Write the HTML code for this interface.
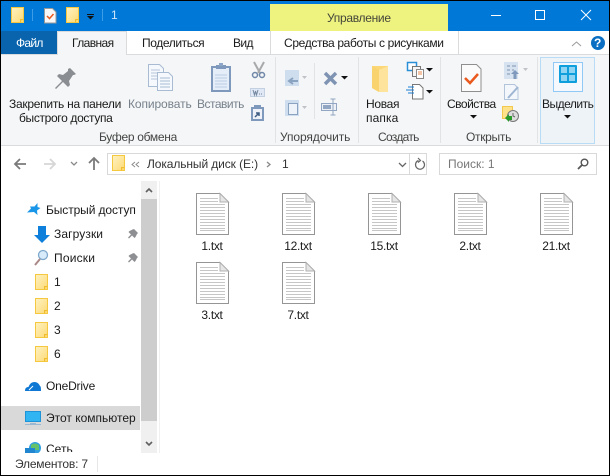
<!DOCTYPE html>
<html><head><meta charset="utf-8">
<style>
*{box-sizing:border-box}
html,body{margin:0;padding:0;width:610px;height:476px;overflow:hidden;background:#000}
#w{position:absolute;left:1px;top:1px;width:608px;height:474px;background:#fff;overflow:hidden}
#r{position:absolute;left:-1px;top:-1px;width:610px;height:476px;font:12px "Liberation Sans",sans-serif;color:#1a1a1a}
.t{position:absolute;white-space:nowrap;line-height:16px}
.g{color:#76818c}
.b{position:absolute}
svg{position:absolute;left:0;top:0}
</style></head><body>
<div id="w"><div id="r">
<div class="b" style="left:0;top:0;width:610px;height:31px;background:#0078d7"></div>
<div class="b" style="left:270px;top:4px;width:178px;height:27px;background:#eef27f"></div>
<div class="b" style="left:0;top:54px;width:610px;height:91px;background:#f5f6f7"></div>
<div class="b" style="left:0;top:145px;width:610px;height:1px;background:#dadbdc"></div>
<div class="b" style="left:0;top:54px;width:610px;height:1px;background:#dadbdc"></div>
<div class="b" style="left:1px;top:31px;width:56px;height:23px;background:#0a64ad"></div>
<div class="b" style="left:57px;top:31px;width:70px;height:24px;background:#f5f6f7;border:1px solid #dadbdc;border-bottom:0"></div>
<div class="b" style="left:270px;top:31px;width:1px;height:23px;background:#dadbdc"></div>
<div class="b" style="left:458px;top:31px;width:1px;height:23px;background:#dadbdc"></div>
<div class="b" style="left:275px;top:57px;width:1px;height:86px;background:#e2e3e4"></div>
<div class="b" style="left:314px;top:63px;width:1px;height:56px;background:#e2e3e4"></div>
<div class="b" style="left:358px;top:57px;width:1px;height:86px;background:#e2e3e4"></div>
<div class="b" style="left:440px;top:57px;width:1px;height:86px;background:#e2e3e4"></div>
<div class="b" style="left:537px;top:57px;width:1px;height:86px;background:#e2e3e4"></div>
<div class="b" style="left:540px;top:57px;width:55px;height:87px;background:#eef3f8;border:1px solid #b8dcf6"></div>
<div class="b" style="left:553px;top:62px;width:30px;height:30px;background:#f5f9fd;border:1px solid #90c8f6"></div>

<div class="b" style="left:107px;top:153px;width:320px;height:22px;border:1px solid #d9d9d9"></div>
<div class="b" style="left:409px;top:153px;width:1px;height:22px;background:#d9d9d9"></div>
<div class="b" style="left:439px;top:153px;width:158px;height:22px;border:1px solid #d9d9d9"></div>

<div class="b" style="left:1px;top:406px;width:139px;height:24px;background:#d9d9d9"></div>
<div class="b" style="left:141px;top:181px;width:16px;height:272px;background:#f0f0f0"></div>
<div class="b" style="left:141px;top:199px;width:16px;height:222px;background:#cdcdcd"></div>
<div class="b" style="left:159px;top:181px;width:1px;height:272px;background:#f0f0f0"></div>

<svg width="610" height="476" viewBox="0 0 610 476">
<defs>
<linearGradient id="fg" x1="0" y1="0" x2="1" y2="1"><stop offset="0" stop-color="#fff2c2"/><stop offset="1" stop-color="#fcd975"/></linearGradient>
<g id="fold"><rect x=".5" y=".5" width="12" height="15" fill="url(#fg)" stroke="#f6c83f"/><path d="M9.500 15.500v-3h3" fill="#f9d566" stroke="#f0bd32"/></g>
<g id="file"><path d="M.5.5H24L32.5 9V41.500H.5Z" fill="#fff" stroke="#959595"/><path d="M24 .5V9H32.500Z" fill="#e6e6e6" stroke="#b0b0b0"/>
<path d="M4 5.500H22M4 8.500H22M4 11.500H29M4 14.500H29M4 17.500H29M4 20.500H29M4 23.500H29M4 26.500H29M4 29.500H29M4 32.500H29M4 35.500H29M4 37.500H29" stroke="#c6c6c6" fill="none"/></g>
<g id="pin"><path d="M7 0l4 4-1 1-1.500 3-1 1-2.500-2.500-3 3-1-1 3-3-2.500-2.500 1-1 3-1.500z" fill="#8d8f92"/></g>
<path id="tri" d="M0 0h7L3.500 3.500z" fill="#111"/>
</defs>

<!-- QAT -->
<use href="#fold" x="11" y="7"/>
<rect x="32" y="9" width="1" height="12" fill="#3d9ce6"/>
<path d="M44.500 8.500h8l3.500 3.500v11h-11.500z" fill="#f8f8f8" stroke="#9a9a9a"/>
<path d="M47 16l2.500 2.500 4-4.500" stroke="#ea5a1e" stroke-width="1.500" fill="none"/>
<use href="#fold" x="66" y="7"/>
<rect x="87" y="14" width="7" height="1" fill="#111"/><use href="#tri" x="87" y="16"/>
<rect x="102" y="9" width="1" height="12" fill="#3d9ce6"/>
<!-- window controls -->
<rect x="491" y="15" width="10" height="1" fill="#fff"/>
<rect x="535.500" y="10.500" width="9" height="9" fill="none" stroke="#fff"/>
<path d="M581 10l10 10M591 10l-10 10" stroke="#fff" fill="none"/>
<path d="M572 46l4.500-4 4.500 4" stroke="#9a9a9a" fill="none"/>
<circle cx="598" cy="43" r="7" fill="#0a6fc2"/>

<!-- Pin big -->
<g transform="translate(55,68)"><path d="M15 0l6 6-2 1-1 0-4 6 1 4-2 2-5-5-7 7-1-1 7-7-5-5 2-2 4 1 5-4 0-2z" fill="#8a8d91"/></g>
<!-- Copy -->
<path d="M148.500 64.500h11l4 4v18h-15z" fill="#f5f8fc" stroke="#a9bbd3"/>
<path d="M151 70h9M151 73h9M151 76h9M151 79h9" stroke="#b6c5da"/>
<path d="M157.500 72.500h11l4 4v14h-15z" fill="#f5f8fc" stroke="#a9bbd3"/>
<path d="M160 78h10M160 81h10M160 84h10M160 87h10" stroke="#a9bbd3"/>
<!-- Paste -->
<rect x="212" y="67" width="18" height="24" fill="#e5edf8" stroke="#7f99bd" stroke-width="2"/>
<path d="M215 75h12M215 78h12M215 81h12M215 84h12M215 87h12" stroke="#bccde3"/>
<rect x="216" y="65" width="10" height="4" fill="#7f99bd"/><rect x="219" y="63" width="4" height="3" fill="#8ea6c6"/>
<!-- Cut -->
<path d="M254 62l6 11M264 62l-6 11" stroke="#a7a9ab" stroke-width="2" fill="none"/>
<circle cx="255" cy="75" r="2.500" fill="none" stroke="#6f87a8" stroke-width="1.500"/>
<circle cx="262" cy="75" r="2.500" fill="none" stroke="#6f87a8" stroke-width="1.500"/>
<rect x="250.500" y="88.500" width="14" height="8" fill="#dfe8f4" stroke="#c2d0e2"/>
<path d="M253 90l1.500 5 1-4 1 4 1.500-5M259 94h1M261 94h1" stroke="#7588a0" fill="none"/>
<rect x="252" y="108" width="11" height="12" fill="#eef2f8" stroke="#7f99bd" stroke-width="2"/>
<rect x="254" y="105" width="7" height="3" fill="#7f99bd"/>
<path d="M255 117l4-4M256 113h3v3" stroke="#3f5c82" fill="none" stroke-width="1.500"/>
<!-- Organize -->
<rect x="285" y="70" width="14" height="16" fill="#cfdeee"/><path d="M289 81h9M293 78l-4 3 4 3" stroke="#8aa3c0" stroke-width="2" fill="none"/>
<path d="M302 76h5l-2.500 3z" fill="#bfc3c8"/>
<rect x="285" y="100" width="14" height="16" fill="#cfdeee"/><rect x="288.500" y="103.500" width="9" height="11" fill="#eef3f9" stroke="#8aa3c0"/>
<path d="M302 106h5l-2.500 3z" fill="#bfc3c8"/>
<path d="M325 73l11 11M336 73l-11 11" stroke="#7f94b3" stroke-width="3.500" fill="none"/>
<use href="#tri" x="341" y="76"/>
<rect x="321.500" y="103.500" width="15" height="7" fill="#eef2f7" stroke="#90a6c2"/><rect x="323" y="105" width="8" height="4" fill="#90a6c2"/>
<path d="M333 99v16M330.500 99h5M330.500 115h5" stroke="#90a6c2" fill="none"/>
<!-- New folder -->
<path d="M372 66l9 0 0 0h7v26l-9 0-7-4z" fill="#fbd777"/>
<path d="M372 66l7 4v22l-7-4z" fill="#f9d36e"/><path d="M379 70l9-4v26h-9z" fill="#fde39b"/>
<!-- New item -->
<rect x="407.500" y="62.500" width="9" height="8" fill="#fff" stroke="#2b8fd8" stroke-width="1.500"/>
<rect x="412.500" y="66.500" width="8" height="10" fill="#f5f5f5" stroke="#777"/>
<rect x="416.500" y="69.500" width="7" height="9" fill="#fff" stroke="#888"/><path d="M418 72h4M418 74h4" stroke="#e8894e"/>
<use href="#tri" x="426" y="68"/>
<path d="M412.500 84.500h7l3.500 3.500v11h-10.500z" fill="#fff" stroke="#777"/>
<path d="M408 87h6M406 90h8M408 93h6" stroke="#1d7fd6" fill="none"/>
<use href="#tri" x="426" y="90"/>
<!-- Properties -->
<path d="M461.500 64.500h15l4.500 4.500v22.500h-19.500z" fill="#fbfbfb" stroke="#8f8f8f"/>
<path d="M465 78l5 5 8-9" stroke="#ea5a1e" stroke-width="2.500" fill="none"/>
<rect x="504" y="62" width="14" height="17" fill="#d6e2f0"/><path d="M507 66h3M507 70h3M507 74h3M512 66h4M512 70h2" stroke="#7d93ae"/>
<path d="M515 70l-4 4h2.500v5h3v-5h2.500z" fill="#7f99bd"/>
<path d="M523 68h5l-2.500 3z" fill="#bfc3c8"/>
<path d="M504.500 84.500h10l3.500 3.500v11.500h-13.500z" fill="#f3f7fc" stroke="#b2c4da"/>
<path d="M508 98l10-11" stroke="#9fb6d2" stroke-width="2" fill="none"/>
<rect x="502.500" y="106.500" width="10" height="12" fill="#fde28a" stroke="#f2c94c"/>
<circle cx="513" cy="116" r="5.500" fill="#ddd" stroke="#777"/>
<path d="M513 113v3l2 1" stroke="#666" fill="none"/>
<path d="M505 118l4-4v2h3v4h-3v2z" fill="#2a9a2a"/>
<use href="#tri" x="470" y="115"/>
<!-- Select -->
<path d="M560 66h16v16h-16z" fill="#8fd4f2"/>
<path d="M559.500 66h17M559.500 74h17M559.500 82h17M560 65.500v17M568 65.500v17M576 65.500v17" stroke="#0f9fdc" stroke-width="2" fill="none"/>
<use href="#tri" x="564" y="115"/>
<!-- Address -->
<path d="M26 164H15M20 159l-5 5 5 5" stroke="#7a7a7a" stroke-width="1.800" fill="none"/>
<path d="M44 164H55M50 159l5 5-5 5" stroke="#d6d6d6" stroke-width="1.800" fill="none"/>
<path d="M71 162l3 3 3-3" stroke="#8a8a8a" stroke-width="1.300" fill="none"/>
<path d="M94 170V158M89 163l5-5 5 5" stroke="#7a7a7a" stroke-width="1.800" fill="none"/>
<use href="#fold" x="112" y="155"/>
<path d="M135 162l-3 2.500 3 2.500M139 162l-3 2.500 3 2.500" stroke="#8a8a8a" fill="none"/>
<path d="M267 162l3 2.500-3 2.500" stroke="#8a8a8a" stroke-width="1.300" fill="none"/>
<path d="M399 163l3.500 3.500 3.500-3.500" stroke="#666" stroke-width="1.300" fill="none"/>
<path d="M422.500 161a4.500 4.500 0 1 1-4-.5M418 158l2.500 2.500-2.500 2" stroke="#666" stroke-width="1.200" fill="none"/>
<circle cx="584.500" cy="162.500" r="3.300" fill="none" stroke="#555" stroke-width="1.400"/><path d="M582 165l-4 4" stroke="#555" stroke-width="1.800"/>
<!-- Nav -->
<path d="M34 212l-7 .5 4-4-1-2 4.500 0 3-3.500 0 4 3 1-3.500 2.500 .5 4.500z" fill="#1a96e8"/>
<path d="M34 235h16l-8 8z" fill="#0f7fdc"/><rect x="38" y="226" width="8" height="10" fill="#0f7fdc"/>
<use href="#pin" x="127" y="229"/><use href="#pin" x="127" y="253"/>
<circle cx="43" cy="255" r="4.500" fill="#d8ebfb" stroke="#7ea8cc" stroke-width="1.300"/>
<path d="M40 259l-5 6" stroke="#a88" stroke-width="2"/>
<use href="#fold" x="35" y="274"/><use href="#fold" x="35" y="298"/><use href="#fold" x="35" y="322"/><use href="#fold" x="35" y="346"/>
<path d="M25 391c0-3 1.500-4 3.500-4 1-3 3-5 6-5 3 0 4.500 2 5.500 4 1 .2 1 3 1 5z" fill="#0f78d4"/><path d="M29 390l4-4" stroke="#fff" fill="none"/>
<rect x="25.500" y="411.500" width="15" height="10" fill="#30b4f2" stroke="#1e93d8"/>
<rect x="25" y="424" width="16" height="1" fill="#9bb8d2"/><rect x="30" y="423" width="6" height="1" fill="#9bb8d2"/>
<circle cx="35" cy="448" r="6" fill="#2f9fe0"/><path d="M31 445c2-2 5-2 8 0v5h-8z" fill="#65c26a"/>
<rect x="25" y="448" width="10" height="5" fill="#1f86cf"/>
<path d="M146 192l3-3 3 3" stroke="#606060" stroke-width="1.600" fill="none"/>
<path d="M146 442l3 3 3-3" stroke="#606060" stroke-width="1.600" fill="none"/>
<!-- Files -->
<use href="#file" x="196" y="193"/><use href="#file" x="282" y="193"/><use href="#file" x="368" y="193"/><use href="#file" x="454" y="193"/><use href="#file" x="540" y="193"/>
<use href="#file" x="196" y="262"/><use href="#file" x="282" y="262"/>
</svg>
<div class="b" style="left:1px;top:453px;width:608px;height:22px;background:#fff"></div>
<div class="b" style="left:97px;top:456px;width:1px;height:16px;background:#e8e8e8"></div>

<div class="t" style="left:111px;top:7px;color:#cfe6fa;font-size:12px">1</div>
<div class="t" style="left:327px;top:10px;color:#44463a;letter-spacing:-.3px">Управление</div>
<div class="t" style="left:16px;top:35px;color:#fff;letter-spacing:-.7px">Файл</div>
<div class="t" style="left:72px;top:35px;letter-spacing:-.6px">Главная</div>
<div class="t" style="left:142px;top:35px;letter-spacing:-.4px">Поделиться</div>
<div class="t" style="left:233px;top:35px;letter-spacing:-.6px">Вид</div>
<div class="t" style="left:284px;top:35px;letter-spacing:-.35px">Средства работы с рисунками</div>

<div class="t" style="left:9px;top:96px;letter-spacing:-.27px">Закрепить на панели</div>
<div class="t" style="left:19px;top:110px;letter-spacing:-.34px">быстрого доступа</div>
<div class="t g" style="left:128px;top:96px;letter-spacing:-.1px">Копировать</div>
<div class="t g" style="left:197px;top:96px;letter-spacing:-.5px">Вставить</div>
<div class="t" style="left:99px;top:129px;color:#444;letter-spacing:-.3px">Буфер обмена</div>
<div class="t" style="left:280px;top:129px;color:#444;letter-spacing:-.1px">Упорядочить</div>
<div class="t" style="left:378px;top:129px;color:#444;letter-spacing:-.7px">Создать</div>
<div class="t" style="left:466px;top:129px;color:#444;letter-spacing:-.3px">Открыть</div>
<div class="t" style="left:366px;top:96px;letter-spacing:-.3px">Новая</div>
<div class="t" style="left:366px;top:110px;letter-spacing:.1px">папка</div>
<div class="t" style="left:447px;top:96px;letter-spacing:-.5px">Свойства</div>
<div class="t" style="left:542px;top:96px;letter-spacing:-.5px">Выделить</div>

<div class="t" style="left:147px;top:156px;color:#333;letter-spacing:-.1px">Локальный диск (E:)</div>
<div class="t" style="left:282px;top:156px;color:#333">1</div>
<div class="t" style="left:448px;top:156px;color:#777">Поиск: 1</div>

<div class="t" style="left:46px;top:202px;letter-spacing:-.1px">Быстрый доступ</div>
<div class="t" style="left:54px;top:226px;letter-spacing:.1px">Загрузки</div>
<div class="t" style="left:54px;top:250px;letter-spacing:.2px">Поиски</div>
<div class="t" style="left:54px;top:274px">1</div>
<div class="t" style="left:54px;top:298px">2</div>
<div class="t" style="left:54px;top:322px">3</div>
<div class="t" style="left:54px;top:346px">6</div>
<div class="t" style="left:46px;top:378px;letter-spacing:-.2px">OneDrive</div>
<div class="t" style="left:46px;top:410px">Этот компьютер</div>
<div style="position:absolute;left:46px;top:440px;height:12px;width:60px;overflow:hidden"><div class="t" style="left:0;top:1px">Сеть</div></div>
<div class="t" style="left:15px;top:456px;color:#333;letter-spacing:-.2px">Элементов: 7</div>

<div class="t" style="left:172px;width:80px;text-align:center;top:238px;letter-spacing:-.3px">1.txt</div>
<div class="t" style="left:258px;width:80px;text-align:center;top:238px;letter-spacing:-.3px">12.txt</div>
<div class="t" style="left:344px;width:80px;text-align:center;top:238px;letter-spacing:-.3px">15.txt</div>
<div class="t" style="left:430px;width:80px;text-align:center;top:238px;letter-spacing:-.3px">2.txt</div>
<div class="t" style="left:516px;width:80px;text-align:center;top:238px;letter-spacing:-.3px">21.txt</div>
<div class="t" style="left:172px;width:80px;text-align:center;top:307px;letter-spacing:-.3px">3.txt</div>
<div class="t" style="left:258px;width:80px;text-align:center;top:307px;letter-spacing:-.3px">7.txt</div>
<div class="t" style="left:594px;top:35px;color:#fff;font-weight:bold;font-size:12px">?</div>
</div></div>
</body></html>
